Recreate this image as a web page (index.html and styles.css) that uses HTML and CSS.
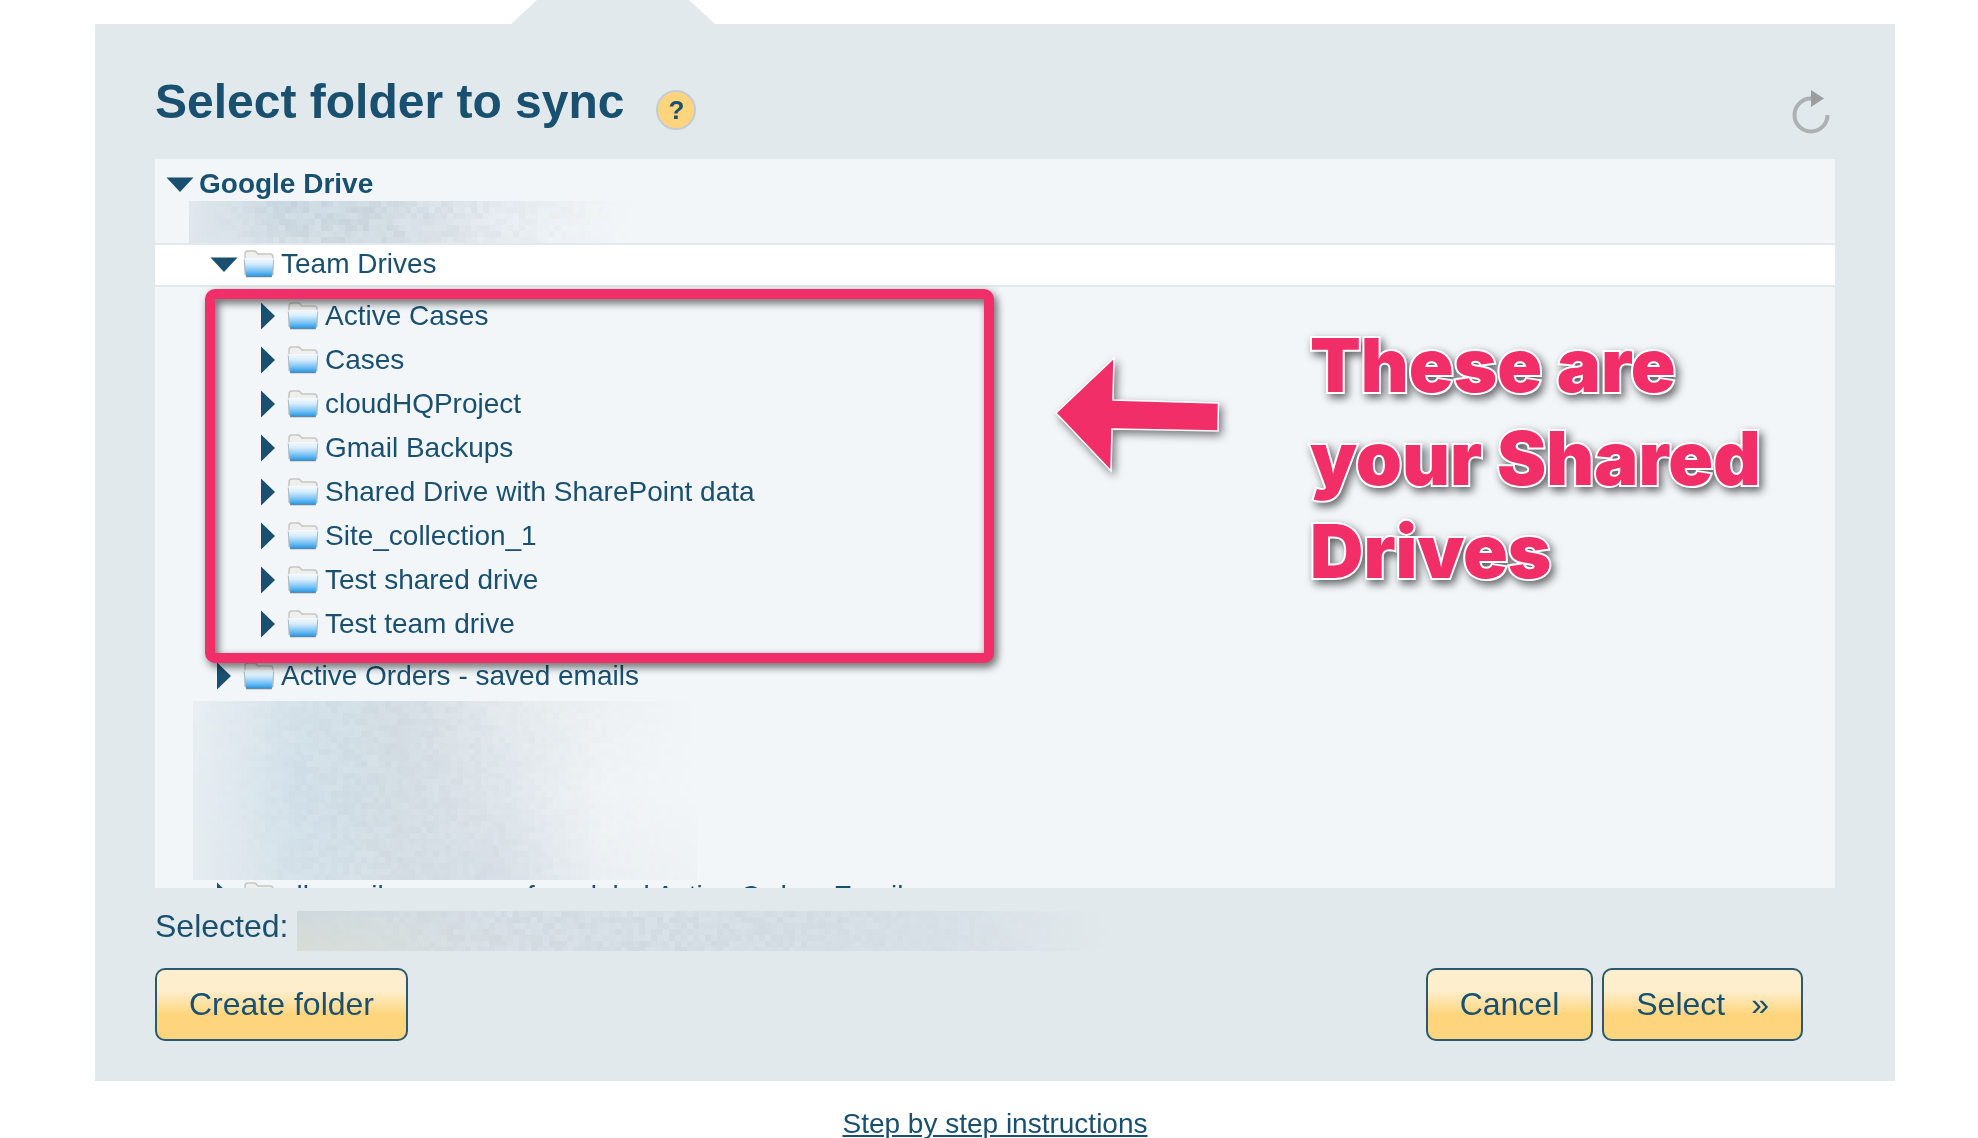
FILE: index.html
```html
<!DOCTYPE html>
<html lang="en">
<head>
<meta charset="utf-8">
<title>Select folder to sync</title>
<link rel="stylesheet" href="styles.css">
</head>
<body>
<svg class="defs" aria-hidden="true">
  <defs>
    <linearGradient id="folder-front" x1="0" y1="0" x2="0" y2="1">
      <stop offset="0" stop-color="#f6fafd"/>
      <stop offset="0.3" stop-color="#d9eefc"/>
      <stop offset="0.65" stop-color="#85c8f6"/>
      <stop offset="1" stop-color="#2399ea"/>
    </linearGradient>
    <symbol id="folder" viewBox="0 0 32 28">
      <path d="M2 24V4q0-3 3-3h6q2 0 3 2l1 1h12q3 0 3 3v17z" fill="#efefed" stroke="#c6c6c4" stroke-width="1.5"/>
      <path d="M.8 9.500Q1 8 3 8h26q2 0 2 1.500L29.500 25q-.2 1.500-1.500 1.500H4Q2.700 26.500 2.500 25z" fill="url(#folder-front)"/>
      <path d="M3.200 26.500h25.600" stroke="#5f8aa8" stroke-width="1.500"/>
      <path d="M1.200 9.500 2.800 25M30.800 9.500 29.200 25" stroke="#a9b9c4" stroke-width="1" fill="none"/>
    </symbol>
    <symbol id="open" viewBox="0 0 28 28"><path d="M.5 7.500h27L14 22z" fill="#19506f"/></symbol>
    <symbol id="closed" viewBox="0 0 28 28"><path d="M7 .5v27L21 14z" fill="#19506f"/></symbol>
  </defs>
</svg>

<div class="tab"></div>
<main class="panel">
  <header class="head">
    <h1>Select folder to sync</h1>
    <button class="help" type="button" aria-label="Help">?</button>
    <button class="refresh" type="button" aria-label="Refresh">
      <svg viewBox="0 0 38 46" width="38" height="46">
        <path d="M19 9.500A16.500 16.500 0 1 0 35.500 26" fill="none" stroke="#aeb1b2" stroke-width="4"/>
        <path d="M19 1v17l13-8.500z" fill="#9c9d9e"/>
      </svg>
    </button>
  </header>

  <div class="tree">
    <div class="row root"><button class="toggle" type="button" aria-label="Collapse"><svg><use href="#open"/></svg></button>Google Drive</div>
    <div class="hidden-row"><canvas class="redaction account" width="448" height="42" data-map="account"></canvas></div>
    <div class="row level-1 current"><button class="toggle" type="button" aria-label="Collapse"><svg><use href="#open"/></svg></button><svg class="folder"><use href="#folder"/></svg>Team Drives</div>
    <div class="group">
      <div class="row level-2"><button class="toggle" type="button" aria-label="Expand"><svg><use href="#closed"/></svg></button><svg class="folder"><use href="#folder"/></svg>Active Cases</div>
      <div class="row level-2"><button class="toggle" type="button" aria-label="Expand"><svg><use href="#closed"/></svg></button><svg class="folder"><use href="#folder"/></svg>Cases</div>
      <div class="row level-2"><button class="toggle" type="button" aria-label="Expand"><svg><use href="#closed"/></svg></button><svg class="folder"><use href="#folder"/></svg>cloudHQProject</div>
      <div class="row level-2"><button class="toggle" type="button" aria-label="Expand"><svg><use href="#closed"/></svg></button><svg class="folder"><use href="#folder"/></svg>Gmail Backups</div>
      <div class="row level-2"><button class="toggle" type="button" aria-label="Expand"><svg><use href="#closed"/></svg></button><svg class="folder"><use href="#folder"/></svg>Shared Drive with SharePoint data</div>
      <div class="row level-2"><button class="toggle" type="button" aria-label="Expand"><svg><use href="#closed"/></svg></button><svg class="folder"><use href="#folder"/></svg>Site_collection_1</div>
      <div class="row level-2"><button class="toggle" type="button" aria-label="Expand"><svg><use href="#closed"/></svg></button><svg class="folder"><use href="#folder"/></svg>Test shared drive</div>
      <div class="row level-2"><button class="toggle" type="button" aria-label="Expand"><svg><use href="#closed"/></svg></button><svg class="folder"><use href="#folder"/></svg>Test team drive</div>
      <div class="highlight"></div>
      <svg class="arrow" viewBox="0 0 180 130" width="180" height="130">
        <path d="M6 60 64 5 63 47 168.500 50 168 78 62 76 61 118z" fill="#f12e68" stroke="#fff" stroke-width="1.500"/>
      </svg>
      <p class="note">These are<br>your Shared<br>Drives</p>
    </div>
    <div class="row level-1"><button class="toggle" type="button" aria-label="Expand"><svg><use href="#closed"/></svg></button><svg class="folder"><use href="#folder"/></svg>Active Orders - saved emails</div>
    <div class="hidden-rows"><canvas class="redaction folders" width="504" height="179" data-map="folders"></canvas></div>
    <div class="row level-1"><button class="toggle" type="button" aria-label="Expand"><svg><use href="#closed"/></svg></button><svg class="folder"><use href="#folder"/></svg>all email messages from label Active Orders Emails</div>
  </div>

  <div class="selected">Selected: <canvas class="path" width="812" height="40" data-map="path"></canvas></div>

  <div class="actions">
    <button class="btn" type="button">Create folder</button>
    <button class="btn push" type="button">Cancel</button>
    <button class="btn" type="button">Select<span class="more">»</span></button>
  </div>
</main>
<footer class="foot"><a href="#instructions">Step by step instructions</a></footer>
<script src="redact.js"></script>
</body>
</html>
```
FILE: styles.css
```css
* { box-sizing: border-box; }

html { scrollbar-width: none; }

body {
  margin: 0;
  background: #fff;
  color: #19506f;
  font-family: "Liberation Sans", Arial, sans-serif;
  font-size: 28px;
}

.defs { position: absolute; width: 0; height: 0; }

button {
  font-family: inherit;
  color: inherit;
  cursor: pointer;
}

.tab {
  width: 204px;
  height: 24px;
  margin-left: 511px;
  background: #e1e9ec;
  clip-path: polygon(26px 0, 178px 0, 100% 100%, 0 100%);
}

.panel {
  margin: 0 83px 0 95px;
  padding: 45px 60px 40px;
  background: #e1e9ec;
}

.head {
  display: flex;
  align-items: center;
  height: 90px;
  padding-bottom: 8px;
}

h1 {
  margin: 0 32px 16px 0;
  font-size: 48px;
  line-height: 56px;
}

.help {
  width: 40px;
  height: 40px;
  padding: 0;
  border: 2px solid #c4ccd2;
  border-radius: 50%;
  background: #fed57d;
  font-size: 26px;
  font-weight: bold;
  line-height: 36px;
}

.refresh {
  display: flex;
  margin: 4px 5px 0 auto;
  padding: 0;
  border: 0;
  background: none;
}

.tree {
  max-height: 729px;
  padding-top: 4px;
  overflow: auto;
  scrollbar-width: none;
  background: #f2f6f9;
}

.row {
  display: flex;
  align-items: center;
  gap: 5px;
  height: 44px;
  padding-left: 11px;
  padding-bottom: 2px;
  line-height: 32px;
  white-space: nowrap;
}

.root { font-weight: bold; }
.level-1 { padding-left: 55px; }
.level-2 { padding-left: 99px; }

.current {
  background: #fff;
  border-top: 2px solid #e1e9ec;
  border-bottom: 2px solid #e1e9ec;
}

.toggle {
  display: flex;
  padding: 0;
  border: 0;
  background: none;
}

.toggle svg { width: 28px; height: 28px; }
.folder { width: 32px; height: 28px; margin-right: 1px; }

.hidden-row { position: relative; height: 36px; }
.hidden-rows { position: relative; height: 176px; }
.redaction { position: absolute; }
.account { left: 34px; top: -6px; }
.folders { left: 38px; top: 2px; }

.group { position: relative; padding: 8px 0; }

.highlight {
  position: absolute;
  left: 50px;
  top: 2px;
  bottom: -8px;
  width: 789px;
  border: 10px solid #f12e68;
  border-radius: 10px;
  filter: drop-shadow(3px 4px 4px rgba(0, 0, 0, 0.6));
}

.arrow {
  position: absolute;
  left: 895px;
  top: 66px;
  filter: drop-shadow(3px 4px 4px rgba(0, 0, 0, 0.5));
}

.note {
  position: absolute;
  left: 1155px;
  top: 32px;
  margin: 0;
  color: #f12e68;
  font-family: Inter, "Liberation Sans", sans-serif;
  font-size: 74px;
  font-weight: 900;
  line-height: 93px;
  white-space: nowrap;
  -webkit-text-stroke: 4px #fff;
  paint-order: stroke fill;
  filter: drop-shadow(3px 4px 4px rgba(0, 0, 0, 0.6));
}

.selected {
  display: flex;
  align-items: center;
  gap: 9px;
  height: 80px;
  padding-bottom: 4px;
  font-size: 32px;
}

.path { margin-top: 10px; }

.actions {
  display: flex;
  gap: 9px;
  padding-right: 32px;
}

.btn {
  height: 73px;
  padding: 0 32px;
  border: 2px solid #2b5a70;
  border-radius: 10px;
  background: linear-gradient(#fdeecd 30%, #fed57d 65%);
  font-size: 32px;
}

.push { margin-left: auto; }
.more { margin-left: 26px; }

.foot {
  margin: 0 83px 0 95px;
  padding-top: 29px;
  overflow: hidden;
  line-height: 28px;
  text-align: center;
}

.foot a { color: inherit; }
```
FILE: redact.js
```js
// Mosaic covers for private names: rows of colour stops plus a little grain.
const maps = {
  account: [
    [[224, 231, 237], [202, 215, 224], [206, 217, 225], [222, 229, 235], [234, 239, 243], [243, 246, 249]],
    [[222, 230, 236], [212, 222, 229], [207, 218, 225], [224, 230, 235], [236, 241, 245], [243, 247, 250]]
  ],
  folders: [
    [[232, 238, 242], [212, 225, 233], [210, 220, 226], [226, 232, 236], [236, 240, 243], [242, 246, 249]],
    [[230, 237, 241], [208, 223, 232], [210, 220, 227], [222, 229, 234], [239, 243, 246], [242, 246, 249]],
    [[230, 236, 240], [212, 225, 233], [212, 221, 228], [214, 222, 229], [234, 239, 243], [238, 242, 245]]
  ],
  path: [
    [[208, 218, 220], [212, 221, 227], [214, 223, 229], [212, 221, 228], [215, 224, 230], [225, 233, 236]],
    [[216, 220, 212], [214, 222, 226], [212, 221, 228], [214, 222, 229], [214, 223, 229], [225, 233, 236]]
  ]
};

const grains = { account: 12, folders: 6, path: 8 };

let seed = 7;
const random = () => (seed = (seed * 16807) % 2147483647) / 2147483647;

function mix(list, t, blend) {
  const at = t * (list.length - 1);
  const i = Math.min(Math.floor(at), list.length - 2);
  return blend(list[i], list[i + 1], at - i);
}

const lerp = (a, b, f) => a.map((v, k) => v + (b[k] - v) * f);

for (const canvas of document.querySelectorAll("canvas")) {
  const pen = canvas.getContext("2d");
  const rows = maps[canvas.dataset.map];
  const cell = 6;
  for (let y = 0; y < canvas.height; y += cell) {
    for (let x = 0; x < canvas.width; x += cell) {
      const tx = x / canvas.width;
      const line = rows.map(stops => mix(stops, tx, lerp));
      const base = mix(line, y / canvas.height, lerp);
      const edge = Math.min(1, tx * 4, (1 - tx) * 2);
      const grain = (random() - 0.5) * grains[canvas.dataset.map] * edge;
      pen.fillStyle = `rgb(${base.map(v => Math.round(v + grain)).join(",")})`;
      pen.fillRect(x, y, cell, cell);
    }
  }
}
```
